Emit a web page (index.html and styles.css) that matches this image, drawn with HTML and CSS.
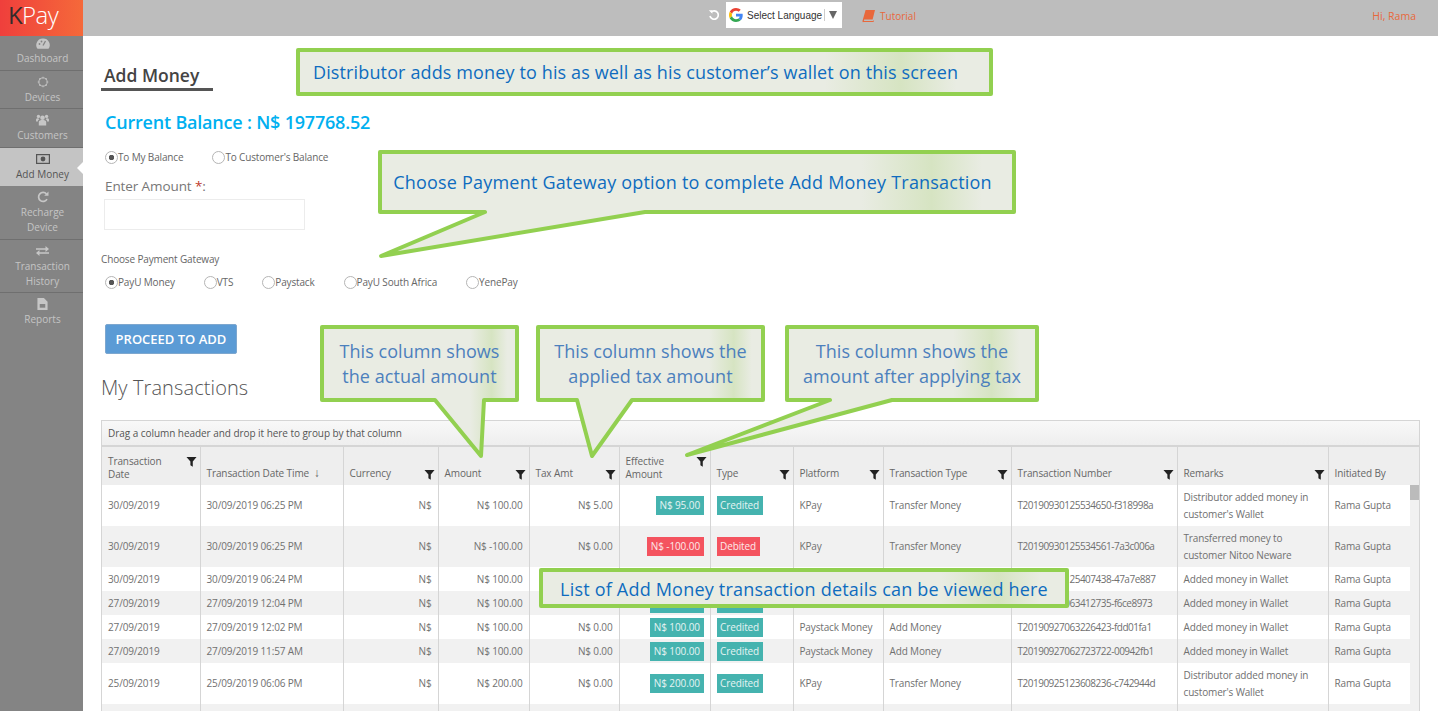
FILE: index.html
```html
<!DOCTYPE html>
<html>
<head>
<meta charset="utf-8" />
<title>Add Money</title>
<link rel="stylesheet" href="styles.css">
</head>
<body>

<svg class="defs" width="0" height="0">
	<defs>
		<symbol id="funnel" viewBox="0 0 12 12"><path d="M.5 1h11L7.4 6v5.6L4.8 10V6z"/></symbol>
		<linearGradient id="sheen">
			<stop offset="0" stop-color="#e9ece3"/>
			<stop offset=".76" stop-color="#e9ece3"/>
			<stop offset=".87" stop-color="#d6e4c2"/>
			<stop offset=".95" stop-color="#e9ece3"/>
			<stop offset="1" stop-color="#e9ece3"/>
		</linearGradient>
	</defs>
</svg>

<div class="topbar">
	<div class="logo"><span class="k">K</span>Pay</div>
	<div class="top-mid">
		<svg class="undo" viewBox="0 0 12 12" width="12" height="12"><path d="M3 3.2A4.2 4.2 0 1 1 2 7" fill="none" stroke="#fff" stroke-width="1.7"/><path d="M.8 1.2h3.6v3.6z" fill="#fff"/></svg>
		<div class="lang">
			<svg viewBox="0 0 48 48" width="14" height="14"><path fill="#ea4335" d="M24 9.500c3.500 0 6.700 1.200 9.200 3.600l6.900-6.900C35.900 2.400 30.400 0 24 0 14.600 0 6.500 5.400 2.600 13.200l8 6.200C12.400 13.700 17.700 9.500 24 9.500z"/><path fill="#4285f4" d="M47 24.500c0-1.600-.1-3.100-.4-4.500H24v9h12.900c-.6 3-2.200 5.500-4.700 7.200l7.700 6c4.500-4.200 7.100-10.300 7.100-17.700z"/><path fill="#fbbc05" d="M10.500 28.600c-.5-1.400-.8-3-.8-4.600s.3-3.200.8-4.600l-8-6.200C.9 16.500 0 20.100 0 24s.9 7.500 2.600 10.800z"/><path fill="#34a853" d="M24 48c6.500 0 11.900-2.100 15.900-5.800l-7.700-6c-2.200 1.400-4.900 2.300-8.200 2.300-6.300 0-11.600-4.200-13.500-9.900l-8 6.200C6.500 42.600 14.600 48 24 48z"/></svg>
			<span class="lang-text">Select Language</span>
			<span class="lang-arrow"></span>
		</div>
		<a class="tutorial">
			<svg viewBox="0 0 14 14" width="14" height="14"><path fill="#e8683c" d="M3.600 1H13l-2.400 9.600H2.200a1 1 0 0 0 0 1.400h9l.4-.8.5.4-.6 1.400H1.400C.6 13.600.3 12.700.6 11.600z"/></svg>
			Tutorial
		</a>
	</div>
	<div class="hello">Hi, Rama</div>
</div>

<div class="layout">
	<ul class="sidebar">
		<li>
			<svg viewBox="0 0 14 12" width="16" height="13"><path d="M7 .5a6.500 6.500 0 0 0-5.500 10.300h11A6.500 6.500 0 0 0 7 .5z" fill="#c6c6c6"/><path d="M7 7.500 9.500 3" stroke="#848484" stroke-width="1.300"/><circle cx="3.500" cy="6" r=".9" fill="#848484"/><circle cx="5.500" cy="3.500" r=".9" fill="#848484"/></svg>
			<span>Dashboard</span>
		</li>
		<li>
			<svg viewBox="0 0 14 14" width="14" height="14"><circle cx="7" cy="7" r="4.800" fill="none" stroke="#c6c6c6" stroke-width="1.100"/><path d="M7 .8v2M7 11.200v2M.8 7h2M11.200 7h2M2.600 2.600l1.400 1.400M10 10l1.400 1.400M2.600 11.400 4 10M10 4l1.400-1.400" stroke="#c6c6c6"/></svg>
			<span>Devices</span>
		</li>
		<li>
			<svg viewBox="0 0 14 13" width="15" height="14" fill="#c6c6c6"><circle cx="7" cy="4" r="2.500"/><circle cx="2.600" cy="2.600" r="1.800"/><circle cx="11.400" cy="2.600" r="1.800"/><path d="M3 12.500V8.500C3 7 5 6.500 7 6.500S11 7 11 8.500v4zM0 8V6c0-.9 1-1.300 2.600-1.300l1 1.300C2.500 6.500 2 7 2 8zM14 8V6c0-.9-1-1.300-2.600-1.300l-1 1.300c1.100.5 1.600 1 1.600 2z"/></svg>
			<span>Customers</span>
		</li>
		<li class="active">
			<svg viewBox="0 0 14 10" width="14" height="10"><rect x=".6" y=".6" width="12.800" height="8.800" fill="#bfbfbf" stroke="#555" stroke-width="1.200"/><circle cx="7" cy="5" r="2.400" fill="#555"/></svg>
			<span>Add Money</span>
		</li>
		<li>
			<svg viewBox="0 0 12 12" width="12" height="12"><path d="M10 8.200A4.500 4.500 0 1 1 9.500 3" fill="none" stroke="#c6c6c6" stroke-width="1.700"/><path d="M11.500.5v4.300H7.200z" fill="#c6c6c6"/></svg>
			<span>Recharge<br>Device</span>
		</li>
		<li>
			<svg viewBox="0 0 13 10" width="13" height="10" fill="#c6c6c6"><path d="M0 2.200h9.500V0L13 3l-3.500 3V3.800H0zM13 6.200H3.500V4L0 7l3.500 3V7.800H13z"/></svg>
			<span>Transaction<br>History</span>
		</li>
		<li>
			<svg viewBox="0 0 11 13" width="11" height="13"><path d="M0 0h7l4 4v9H0z" fill="#c6c6c6"/><path d="M2.500 6.500h6v4h-6z" fill="#848484"/></svg>
			<span>Reports</span>
		</li>
	</ul>

	<div class="main">
		<h1 class="title">Add Money</h1>
		<div class="balance">Current Balance : N$ 197768.52</div>

		<div class="radios first">
			<label class="radio on">To My Balance</label>
			<label class="radio">To Customer's Balance</label>
		</div>
		<div class="amount-label">Enter Amount <em>*</em>:</div>
		<input class="amount" type="text">

		<div class="gateway-label">Choose Payment Gateway</div>
		<div class="radios gateways">
			<label class="radio on">PayU Money</label>
			<label class="radio">VTS</label>
			<label class="radio">Paystack</label>
			<label class="radio">PayU South Africa</label>
			<label class="radio">YenePay</label>
		</div>

		<button class="btn">PROCEED TO ADD</button>
		<h2 class="sub">My Transactions</h2>

		<div class="grid">
			<div class="group-bar">Drag a column header and drop it here to group by that column</div>
			<table class="grid-head">
				<colgroup><col class="c1"><col class="c2"><col class="c3"><col class="c4"><col class="c5"><col class="c6"><col class="c7"><col class="c8"><col class="c9"><col class="c10"><col class="c11"><col class="c12"></colgroup>
				<tr>
					<th class="hi">Transaction<br>Date<svg class="fn"><use href="#funnel"/></svg></th>
					<th>Transaction Date Time <span class="sort">↓</span></th>
					<th>Currency<svg class="fn"><use href="#funnel"/></svg></th>
					<th>Amount<svg class="fn"><use href="#funnel"/></svg></th>
					<th>Tax Amt<svg class="fn"><use href="#funnel"/></svg></th>
					<th class="hi">Effective<br>Amount<svg class="fn"><use href="#funnel"/></svg></th>
					<th>Type<svg class="fn"><use href="#funnel"/></svg></th>
					<th>Platform<svg class="fn"><use href="#funnel"/></svg></th>
					<th>Transaction Type<svg class="fn"><use href="#funnel"/></svg></th>
					<th>Transaction Number<svg class="fn"><use href="#funnel"/></svg></th>
					<th>Remarks<svg class="fn"><use href="#funnel"/></svg></th>
					<th>Initiated By</th>
				</tr>
			</table>
			<div class="grid-body">
				<table class="rows">
					<colgroup><col class="c1"><col class="c2"><col class="c3"><col class="c4"><col class="c5"><col class="c6"><col class="c7"><col class="c8"><col class="c9"><col class="c10"><col class="c11"><col class="c12"></colgroup>
					<tr class="tall">
						<td>30/09/2019</td><td>30/09/2019 06:25 PM</td><td class="r">N$</td><td class="r">N$ 100.00</td><td class="r">N$ 5.00</td>
						<td class="r"><b class="tag">N$ 95.00</b></td><td><b class="tag">Credited</b></td><td>KPay</td><td>Transfer Money</td>
						<td class="num">T20190930125534650-f318998a</td><td>Distributor added money in<br>customer's Wallet</td><td>Rama Gupta</td>
					</tr>
					<tr class="tall alt">
						<td>30/09/2019</td><td>30/09/2019 06:25 PM</td><td class="r">N$</td><td class="r">N$ -100.00</td><td class="r">N$ 0.00</td>
						<td class="r"><b class="tag red">N$ -100.00</b></td><td><b class="tag red">Debited</b></td><td>KPay</td><td>Transfer Money</td>
						<td class="num">T20190930125534561-7a3c006a</td><td>Transferred money to<br>customer Nitoo Neware</td><td>Rama Gupta</td>
					</tr>
					<tr>
						<td>30/09/2019</td><td>30/09/2019 06:24 PM</td><td class="r">N$</td><td class="r">N$ 100.00</td><td class="r"></td>
						<td class="r"><b class="tag">N$ 100.00</b></td><td><b class="tag">Credited</b></td><td></td><td></td>
						<td class="num">T20190930125407438-47a7e887</td><td>Added money in Wallet</td><td>Rama Gupta</td>
					</tr>
					<tr class="alt">
						<td>27/09/2019</td><td>27/09/2019 12:04 PM</td><td class="r">N$</td><td class="r">N$ 100.00</td><td class="r"></td>
						<td class="r"><b class="tag">N$ 100.00</b></td><td><b class="tag">Credited</b></td><td></td><td></td>
						<td class="num">T20190927063412735-f6ce8973</td><td>Added money in Wallet</td><td>Rama Gupta</td>
					</tr>
					<tr>
						<td>27/09/2019</td><td>27/09/2019 12:02 PM</td><td class="r">N$</td><td class="r">N$ 100.00</td><td class="r">N$ 0.00</td>
						<td class="r"><b class="tag">N$ 100.00</b></td><td><b class="tag">Credited</b></td><td>Paystack Money</td><td>Add Money</td>
						<td class="num">T20190927063226423-fdd01fa1</td><td>Added money in Wallet</td><td>Rama Gupta</td>
					</tr>
					<tr class="alt">
						<td>27/09/2019</td><td>27/09/2019 11:57 AM</td><td class="r">N$</td><td class="r">N$ 100.00</td><td class="r">N$ 0.00</td>
						<td class="r"><b class="tag">N$ 100.00</b></td><td><b class="tag">Credited</b></td><td>Paystack Money</td><td>Add Money</td>
						<td class="num">T20190927062723722-00942fb1</td><td>Added money in Wallet</td><td>Rama Gupta</td>
					</tr>
					<tr class="tall">
						<td>25/09/2019</td><td>25/09/2019 06:06 PM</td><td class="r">N$</td><td class="r">N$ 200.00</td><td class="r">N$ 0.00</td>
						<td class="r"><b class="tag">N$ 200.00</b></td><td><b class="tag">Credited</b></td><td>KPay</td><td>Transfer Money</td>
						<td class="num">T20190925123608236-c742944d</td><td>Distributor added money in<br>customer's Wallet</td><td>Rama Gupta</td>
					</tr>
					<tr class="end alt">
						<td></td><td></td><td></td><td></td><td></td><td></td><td></td><td></td><td></td><td></td><td></td><td></td>
					</tr>
				</table>
				<div class="scrollbar"><div class="thumb"></div></div>
			</div>
		</div>
	</div>
</div>

<!-- callouts on top of the page -->
<svg class="shapes" width="1438" height="711">
	<g fill="url(#sheen)" stroke="#92d050" stroke-width="4" stroke-linejoin="round">
		<polygon points="298,50 991,50 991,94 298,94"/>
		<polygon points="380,152 1014,152 1014,212 645,212 381,256 485,212 380,212"/>
		<polygon points="322,327 517,327 517,400 484,400 481,456 435,400 322,400"/>
		<polygon points="538,327 763,327 763,400 632,400 592,456 577,400 538,400"/>
		<polygon points="787,327 1037,327 1037,400 892,400 687,455 830,400 787,400"/>
		<polygon points="541,570 1067,570 1067,606 541,606"/>
	</g>
</svg>
<div class="note n1">Distributor adds money to his as well as his customer’s wallet on this screen</div>
<div class="note n2">Choose Payment Gateway option to complete Add Money Transaction</div>
<div class="note n3 soft">This column shows<br>the actual amount</div>
<div class="note n4 soft">This column shows the<br>applied tax amount</div>
<div class="note n5 soft">This column shows the<br>amount after applying tax</div>
<div class="note n6">List of Add Money transaction details can be viewed here</div>

</body>
</html>
```

FILE: styles.css
```css
/*reset*/
* { padding: 0; margin: 0; box-sizing: border-box; }
html, body { height: 711px; overflow: hidden; }
body { font-family: "Open Sans", "Noto Sans", sans-serif; font-size: 10px; color: #666; background: #fff; position: relative; }
li { list-style: none; }
.defs { position: absolute; }

/*topbar*/
.topbar { height: 36px; background: #bdbdbd; display: flex; align-items: flex-start; }
.logo { width: 83px; height: 36px; background: linear-gradient(90deg, #ef3f3c, #f5693a); color: #fff; font-size: 24px; line-height: 29px; padding-left: 8px; letter-spacing: -.6px; font-weight: 300; flex: none; }
.logo .k { color: #332c2c; font-weight: 400; }
.top-mid { display: flex; align-items: center; margin: 2px 0 0 625px; height: 26px; }
.undo { margin-right: 6px; }
.lang { width: 116px; height: 26px; background: #fff; display: flex; align-items: center; padding-left: 3px; position: relative; }
.lang-text { font-family: "Liberation Sans", sans-serif; font-size: 10px; color: #333; margin-left: 4px; }
.lang-arrow { position: absolute; right: 5px; top: 9px; width: 0; height: 0; border: 4px solid transparent; border-top: 8px solid #666; border-bottom: 0; }
.lang-arrow::before { content: ""; position: absolute; left: -9px; top: -10px; height: 12px; border-left: 1px solid #ccc; }
.tutorial { display: flex; align-items: center; gap: 4px; margin: 2px 0 0 20px; color: #e8683c; font-size: 10px; }
.hello { margin: 9px 22px 0 auto; color: #e8683c; font-size: 10.500px; line-height: 14px; }

/*sidebar*/
.layout { display: flex; height: 675px; }
.sidebar { width: 83px; background: #848484; flex: none; }
.sidebar li { display: flex; flex-direction: column; align-items: center; color: #c4c4c4; font-size: 10px; line-height: 15px; text-align: center; padding: 5px 0 0 2px; border-bottom: 1px solid #6f6f6f; height: 38px; gap: 2px; position: relative; }
.sidebar li:first-child { height: 35px; padding-top: 2px; gap: 1px; }
.sidebar li:nth-child(3) { height: 39px; }
.sidebar li:nth-child(5) { height: 54px; }
.sidebar li:nth-child(6) { height: 53px; }
.sidebar li:last-child { border-bottom: 0; }
.sidebar li svg { flex: none; height: 12px; }
.sidebar .active { background: #c4c4c4; color: #555; border-bottom: 0; }
.sidebar .active::after { content: ""; position: absolute; right: 0; top: 14px; border: 6px solid transparent; border-right-color: #fff; border-left: 0; }

/*main*/
.main { flex: 1; min-width: 0; padding: 26px 18px 0 18px; overflow: hidden; }
.title { font-size: 17.500px; font-weight: 600; color: #444; width: 112px; line-height: 26px; padding-left: 3px; border-bottom: 3px solid #555; height: 29px; }
.balance { font-size: 18px; letter-spacing: -.2px; font-weight: 600; color: #00b0f0; line-height: 26px; margin: 18px 0 0 4px; }
.radios { display: flex; }
.radio { font-size: 10px; letter-spacing: -.15px; line-height: 14px; display: flex; align-items: center; color: #666; }
.radio::before { content: ""; width: 11px; height: 11px; border: 1px solid #b5b5b5; border-radius: 50%; background: #fff; flex: none; }
.radio.on::before { background: radial-gradient(circle, #555 0 2.500px, #fff 3px); }
.first { margin: 15px 0 0 4px; gap: 29px; }
.amount-label { font-size: 13.500px; letter-spacing: -.1px; color: #777; line-height: 20px; margin: 12px 0 0 4px; }
.amount-label em { color: #c0392b; font-style: normal; }
.amount { display: block; width: 201px; height: 31px; border: 1px solid #ececec; margin: 3px 0 0 3px; outline: 0; }
.gateway-label { font-size: 10px; letter-spacing: -.15px; line-height: 14px; margin-top: 22px; color: #666; }
.gateways { margin: 9px 0 0 4px; gap: 29px; }
.btn { display: block; width: 132px; height: 30px; margin: 35px 0 0 4px; background: #5b9bd5; border: 1px solid #7da7cf; border-radius: 2px; color: #fff; font-family: inherit; font-size: 13px; font-weight: 600; }
.sub { font-size: 20px; letter-spacing: .1px; font-weight: 300; color: #555; line-height: 26px; margin-top: 21px; }

/*grid*/
.grid { margin-top: 19px; border: 1px solid #d5d5d5; border-bottom: 0; }
.group-bar { height: 26px; background: linear-gradient(#f8f8f8, #eee); border-bottom: 2px solid #d5d5d5; line-height: 25px; padding-left: 6px; font-size: 10px; letter-spacing: -.05px; color: #555; }
table { border-collapse: collapse; table-layout: fixed; }
.grid-head { width: 1317px; background: #eee; }
.grid-head th { height: 38px; font-weight: 400; text-align: left; vertical-align: bottom; padding: 0 6px 5px; line-height: 13px; border-right: 1px solid #d5d5d5; position: relative; font-size: 10px; letter-spacing: -.1px; color: #666; white-space: nowrap; }
.grid-head th:last-child { border-right: 0; }
.grid-head .hi { padding-bottom: 4px; }
.sort { margin-left: 2px; font-size: 12px; }
.fn { position: absolute; right: 3px; bottom: 5px; width: 11px; height: 11px; fill: #222; }
.hi .fn { bottom: auto; top: 9px; }
.c1 { width: 98px; } .c2 { width: 143px; } .c3 { width: 95px; } .c4 { width: 91px; }
.c5 { width: 90px; } .c6 { width: 91px; } .c7 { width: 83px; } .c8 { width: 90px; }
.c9 { width: 128px; } .c10 { width: 166px; } .c11 { width: 151px; } .c12 { width: 91px; }
.grid-body { display: flex; position: relative; }
.rows { width: 1317px; flex: none; }
.rows td { height: 24px; padding: 0 6px; border-right: 1px solid #d5d5d5; font-size: 10px; letter-spacing: -.15px; line-height: 16.500px; color: #707070; white-space: nowrap; }
.rows td:last-child { border-right: 0; }
.rows .tall td { height: 41px; }
.rows .end td { height: 7px; }
.rows .alt td { background: #f1f1f1; }
.rows .r { text-align: right; }
.rows .num { letter-spacing: -.5px; }
.tag { display: inline-block; background: #45b3af; color: #e6f4f3; font-weight: 400; line-height: 19px; padding: 0 3.500px; vertical-align: middle; letter-spacing: -.1px; }
.tag.red { background: #f4535f; color: #fdeaea; }
.scrollbar { position: absolute; right: 0; top: 0; width: 9px; height: 226px; background: #f1f1f1; }
.thumb { height: 15px; background: #bbb; }

/*callouts*/
.shapes { position: absolute; left: 0; top: 0; }
.note { position: absolute; color: #0f6cbf; font-size: 18px; letter-spacing: .2px; line-height: 25px; white-space: nowrap; text-align: center; }
.note.soft { color: #4c80bd; letter-spacing: .05px; }
.n1 { left: 313px; top: 60px; letter-spacing: .13px; }
.n2 { left: 374px; width: 637px; top: 170px; }
.n3 { left: 321px; width: 197px; top: 339px; }
.n4 { left: 537px; width: 227px; top: 339px; }
.n5 { left: 786px; width: 252px; top: 339px; }
.n6 { left: 540px; width: 528px; top: 577px; }
```
